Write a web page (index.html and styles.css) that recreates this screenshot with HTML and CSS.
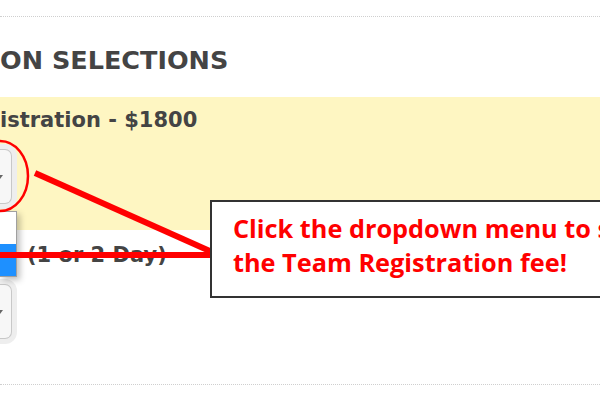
FILE: index.html
```html
<!DOCTYPE html>
<html lang="en">
<head>
    <meta charset="UTF-8">
    <title>Registration Selections</title>
    <link rel="stylesheet" href="styles.css">
</head>
<body>
    <div class="page">
        <div class="rule"></div>

        <h2 class="section-title">ON SELECTIONS</h2>

        <div class="option option-highlight">
            <div class="option-label">istration - $1800</div>
            <div class="select"><span class="caret"></span></div>
        </div>

        <div class="option">
            <div class="option-label option-label-shift">(1 or 2 Day)</div>
            <div class="select"><span class="caret"></span></div>
        </div>

        <div class="rule"></div>

        <!-- open dropdown list of the first select -->
        <div class="dropdown-list">
            <div class="dropdown-item"></div>
            <div class="dropdown-item active"></div>
        </div>

        <!-- annotation marks drawn over the page -->
        <svg class="annotation" width="600" height="400" viewBox="0 0 600 400">
            <ellipse cx="0" cy="176" rx="28" ry="35" fill="none" stroke="#ff0000" stroke-width="2.5"/>
            <line x1="35" y1="173" x2="212" y2="252" stroke="#ff0000" stroke-width="6"/>
            <line x1="0" y1="255" x2="212" y2="255" stroke="#ff0000" stroke-width="6"/>
        </svg>

        <div class="callout">
            <div>Click the dropdown menu to s</div>
            <div>the Team Registration fee!</div>
        </div>
    </div>
</body>
</html>
```

FILE: styles.css
```css
body {
    margin: 0;
    font-family: "DejaVu Sans", Verdana, sans-serif;
    background: #ffffff;
    color: #444444;
    overflow: hidden;
}

.page {
    position: relative;
    width: 600px;
    height: 400px;
    overflow: hidden;
}

.rule {
    border-top: 1px dotted #cfcfcf;
}

.page > .rule:first-child {
    margin-top: 16px;
}

.section-title {
    margin: 29px 0 23px 0;
    font-size: 25.5px;
    line-height: 28px;
    font-weight: bold;
    color: #444444;
}

.option {
    padding: 13px 0 45px 0;
}

.option-highlight {
    background-color: #fef6c2;
    padding: 11px 0 26px 0;
}

.option-label {
    font-size: 21px;
    line-height: 24px;
    font-weight: bold;
    color: #444444;
}

.option-label-shift {
    padding-left: 27px;
}

.option-highlight .select {
    margin-top: 16px;
}

.option .select {
    margin-top: 17px;
}

.select {
    width: 11px;
    height: 53px;
    background: #f7f7f7;
    border: 1px solid #c8c8c8;
    border-left: none;
    border-radius: 0 7px 7px 0;
    box-shadow: 0 0 0 5px #eeeeee;
    display: flex;
    align-items: center;
}

.caret {
    width: 0;
    height: 0;
    margin-left: 0;
    border-top: 4px solid #666666;
    border-left: 3px solid transparent;
    border-right: 3px solid transparent;
    margin-left: -3px;
}

.dropdown-list {
    position: absolute;
    left: 0;
    top: 211px;
    width: 16px;
    border: 1px solid #a0a0a0;
    border-left: none;
    background: #ffffff;
    box-shadow: 3px 3px 6px rgba(0, 0, 0, 0.25);
}

.dropdown-item {
    height: 32px;
}

.dropdown-item.active {
    background-color: #1e90ff;
}

.annotation {
    position: absolute;
    left: 0;
    top: 0;
}

.callout {
    position: absolute;
    left: 210px;
    top: 200px;
    width: 420px;
    height: 98px;
    padding: 9px 0 0 21px;
    box-sizing: border-box;
    border: 2px solid #333333;
    background: #ffffff;
    font-family: "Open Sans", "Noto Sans", sans-serif;
    font-weight: bold;
    font-size: 25.3px;
    line-height: 34px;
    color: #ff0000;
    white-space: nowrap;
}
```
